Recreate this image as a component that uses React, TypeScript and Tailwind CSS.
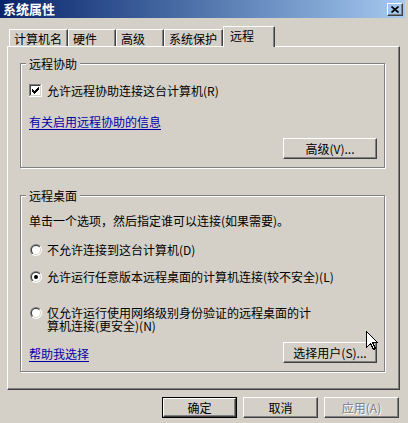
import React, { useId } from "react";

const raised =
  "border border-t-white border-l-white border-r-[#404040] border-b-[#404040] shadow-[inset_-1px_-1px_0_#808080]";

function Checkbox() {
  const checks = [
    [3, 5],
    [4, 6],
    [5, 7],
    [6, 6],
    [7, 5],
    [8, 4],
    [9, 3],
  ];
  return (
    <svg width="13" height="13" viewBox="0 0 13 13" shapeRendering="crispEdges" className="shrink-0">
      <rect x="0" y="0" width="13" height="13" fill="#ffffff" />
      <rect x="0" y="0" width="12" height="1" fill="#808080" />
      <rect x="0" y="0" width="1" height="12" fill="#808080" />
      <rect x="1" y="1" width="10" height="1" fill="#404040" />
      <rect x="1" y="1" width="1" height="10" fill="#404040" />
      <rect x="1" y="11" width="11" height="1" fill="#D4D0C8" />
      <rect x="11" y="1" width="1" height="11" fill="#D4D0C8" />
      {checks.map(([x, y]) => (
        <rect key={x} x={x} y={y} width="1" height="3" fill="#000" />
      ))}
    </svg>
  );
}

function Radio({ checked }: { checked?: boolean }) {
  const id = useId().replace(/:/g, "");
  return (
    <svg width="12" height="12" viewBox="0 0 12 12" className="shrink-0">
      <defs>
        <linearGradient id={`o${id}`} x1="0" y1="0" x2="1" y2="1">
          <stop offset="0.5" stopColor="#808080" />
          <stop offset="0.5" stopColor="#ffffff" />
        </linearGradient>
        <linearGradient id={`i${id}`} x1="0" y1="0" x2="1" y2="1">
          <stop offset="0.5" stopColor="#404040" />
          <stop offset="0.5" stopColor="#D4D0C8" />
        </linearGradient>
      </defs>
      <circle cx="6" cy="6" r="6" fill={`url(#o${id})`} />
      <circle cx="6" cy="6" r="5" fill={`url(#i${id})`} />
      <circle cx="6" cy="6" r="4" fill="#ffffff" />
      {checked && <circle cx="6" cy="6" r="2" fill="#000" />}
    </svg>
  );
}

function Group({
  title,
  className,
  children,
}: {
  title: string;
  className: string;
  children: React.ReactNode;
}) {
  return (
    <div
      className={
        "relative border border-[#808080] shadow-[inset_1px_1px_0_#fff,1px_1px_0_#fff] " + className
      }
    >
      <span className="absolute left-[5px] top-[-7px] bg-[#D4D0C8] px-[3px] leading-[14px]">
        {title}
      </span>
      {children}
    </div>
  );
}

function Button({ children, className }: { children: React.ReactNode; className: string }) {
  return (
    <div className={`${raised} flex items-center justify-center leading-[14px] ${className}`}>
      {children}
    </div>
  );
}

export default function App() {
  return (
    <div className="relative w-[408px] h-[423px] overflow-hidden bg-[#D4D0C8] text-[12px] text-black font-['Noto_Sans_CJK_SC','Noto_Sans',sans-serif]">
      {/* Title bar */}
      <div className="flex h-[18px] w-[405px] items-start bg-gradient-to-r from-[#0A246A] to-[#A6CAF0] pl-[3px] pr-[2px]">
        <span className="mt-[1px] text-[13px] font-bold leading-[16px] text-white">系统属性</span>
        <div className={`${raised} ml-auto mt-[3px] flex h-[13px] w-[16px] items-center justify-center`}>
          <svg width="8" height="7" viewBox="0 0 8 7">
            <path d="M0.5 0.5 L7.5 6.5 M7.5 0.5 L0.5 6.5" stroke="#000" strokeWidth="1.6" />
          </svg>
        </div>
      </div>

      {/* Tabs */}
      <div className="mt-[8px] flex h-[20px] items-end pl-[9px]">
        {[
          ["计算机名", "w-[59px]"],
          ["硬件", "w-[48px]"],
          ["高级", "w-[48px]"],
          ["系统保护", "w-[59px]"],
        ].map(([t, w]) => (
          <div
            key={t}
            className={`h-[17px] ${w} border-l border-t border-r border-t-white border-l-white border-r-[#404040] shadow-[inset_-1px_0_0_#808080] pl-[4px] pt-[2px] leading-[14px]`}
          >
            {t}
          </div>
        ))}
        <div className="relative z-10 -mb-px h-[21px] w-[52px] border-l border-t border-r border-t-white border-l-white border-r-[#404040] bg-[#D4D0C8] shadow-[inset_-1px_0_0_#808080] pl-[6px] pt-[2px] leading-[14px]">
          远程
        </div>
      </div>

      {/* Panel */}
      <div className={`${raised} ml-[7px] h-[344px] w-[393px] pl-[12px] pt-[16px]`}>
        <Group title="远程协助" className="h-[105px] w-[365px] pl-[8px] pr-[7px] pt-[20px]">
          <div className="flex h-[13px] items-center gap-[5px]">
            <Checkbox />
            <span className="leading-[14px]">允许远程协助连接这台计算机(R)</span>
          </div>
          <div className="mt-[18px] w-fit leading-[14px] text-[#0000A8] underline underline-offset-2">
            有关启用远程协助的信息
          </div>
          <div className="mt-[9px] flex justify-end">
            <Button className="h-[21px] w-[94px]">高级(V)...</Button>
          </div>
        </Group>

        <Group title="远程桌面" className="mt-[27px] h-[177px] w-[365px] pl-[8px] pr-[7px] pt-[18px]">
          <div className="leading-[14px]">单击一个选项，然后指定谁可以连接(如果需要)。</div>
          <div className="ml-px mt-[16px] flex h-[12px] items-center gap-[5px]">
            <Radio />
            <span className="leading-[14px]">不允许连接到这台计算机(D)</span>
          </div>
          <div className="ml-px mt-[15px] flex h-[12px] items-center gap-[5px]">
            <Radio checked />
            <span className="leading-[14px]">允许运行任意版本远程桌面的计算机连接(较不安全)(L)</span>
          </div>
          <div className="ml-px mt-[24px] flex items-start gap-[5px]">
            <Radio />
            <span className="-mt-px leading-[13px]">
              仅允许运行使用网络级别身份验证的远程桌面的计
              <br />
              算机连接(更安全)(N)
            </span>
          </div>
          <div className="mt-[10px] flex h-[21px] items-center justify-between">
            <span className="pt-[3px] leading-[14px] text-[#0000A8] underline underline-offset-2">帮助我选择</span>
            <Button className="h-[21px] w-[94px]">选择用户(S)...</Button>
          </div>
        </Group>
      </div>

      {/* Bottom buttons */}
      <div className="mt-[7px] flex justify-end gap-[6px] pr-[9px]">
        <div className="h-[21px] w-[75px] border border-black">
          <div className={`${raised} flex h-full w-full items-center justify-center leading-[14px]`}>确定</div>
        </div>
        <Button className="h-[21px] w-[75px]">取消</Button>
        <Button className="h-[21px] w-[75px] text-[#808080] [text-shadow:1px_1px_0_#fff]">应用(A)</Button>
      </div>

      {/* Mouse cursor */}
      <svg
        className="absolute left-[366px] top-[331px]"
        width="13"
        height="20"
        viewBox="0 0 13 20"
        shapeRendering="crispEdges"
      >
        <path
          d="M0.5 0.5 L0.5 16.5 L4.5 12.5 L7.5 18.5 L9.5 17.5 L6.5 11.5 L11.5 11.5 Z"
          fill="#fff"
          stroke="#000"
          strokeWidth="1"
        />
      </svg>
    </div>
  );
}
